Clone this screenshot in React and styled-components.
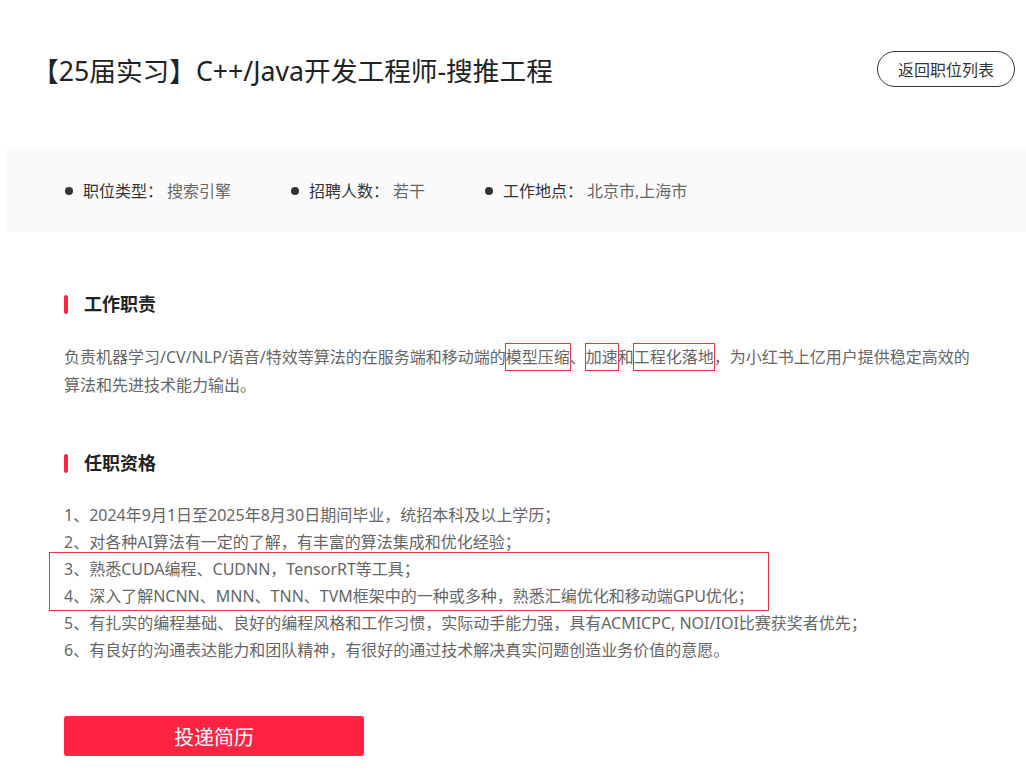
import React from 'react';
import styled, { createGlobalStyle } from 'styled-components';

const GlobalStyle = createGlobalStyle`
    html, body {
        margin: 0;
        padding: 0;
        background: #fff;
        overflow: hidden;
    }
    body {
        font-family: "Noto Sans", "Noto Sans CJK SC", sans-serif;
        color: #333;
    }
`;

const infos = [
    { label: '职位类型：', value: '搜索引擎' },
    { label: '招聘人数：', value: '若干' },
    { label: '工作地点：', value: '北京市,上海市' },
];

const requirements = [
    '1、2024年9月1日至2025年8月30日期间毕业，统招本科及以上学历；',
    '2、对各种AI算法有一定的了解，有丰富的算法集成和优化经验；',
    '3、熟悉CUDA编程、CUDNN，TensorRT等工具；',
    '4、深入了解NCNN、MNN、TNN、TVM框架中的一种或多种，熟悉汇编优化和移动端GPU优化；',
    '5、有扎实的编程基础、良好的编程风格和工作习惯，实际动手能力强，具有ACMICPC, NOI/IOI比赛获奖者优先；',
    '6、有良好的沟通表达能力和团队精神，有很好的通过技术解决真实问题创造业务价值的意愿。',
];

const App = () => {
    return (
        <>
            <GlobalStyle />
            <Page>
                <Header>
                    <Title>【25届实习】C++/Java开发工程师-搜推工程</Title>
                    <BackButton>返回职位列表</BackButton>
                </Header>

                <InfoBand>
                    {infos.map((item) => (
                        <InfoItem key={item.label}>
                            <Dot />
                            <InfoLabel>{item.label}</InfoLabel>
                            <InfoValue>{item.value}</InfoValue>
                        </InfoItem>
                    ))}
                </InfoBand>

                <Content>
                    <SectionTitle>工作职责</SectionTitle>
                    <Paragraph>
                        负责机器学习/CV/NLP/语音/特效等算法的在服务端和移动端的<Mark>模型压缩</Mark>、<Mark>加速</Mark>和<Mark>工程化落地</Mark>，为小红书上亿用户提供稳定高效的算法和先进技术能力输出。
                    </Paragraph>

                    <SectionTitle $top={52}>任职资格</SectionTitle>
                    <List>
                        {requirements.slice(0, 2).map((r) => <Item key={r}>{r}</Item>)}
                        <MarkedBlock>
                            {requirements.slice(2, 4).map((r) => <Item key={r}>{r}</Item>)}
                        </MarkedBlock>
                        {requirements.slice(4).map((r) => <Item key={r}>{r}</Item>)}
                    </List>

                    <ApplyButton>投递简历</ApplyButton>
                </Content>
            </Page>
        </>
    );
};
export default App;

const Page = styled.div`
    width: 1026px;
    min-height: 771px;
    box-sizing: border-box;
`;

const Header = styled.div`
    display: flex;
    justify-content: space-between;
    align-items: center;
    padding: 50px 11px 0 32px;
`;

const Title = styled.h1`
    margin: 0;
    font-size: 26.7px;
    line-height: 42px;
    font-weight: 400;
    color: #222;
`;

const BackButton = styled.button`
    height: 36px;
    padding: 0 20px;
    margin-top: -4px;
    border: 1px solid #333;
    border-radius: 18px;
    background: #fff;
    font-family: inherit;
    font-size: 16px;
    color: #333;
    cursor: pointer;
`;

const InfoBand = styled.div`
    display: flex;
    align-items: center;
    gap: 60px;
    height: 83px;
    margin: 57px 0 0 5px;
    padding-left: 60px;
    background: #fafafa;
`;

const InfoItem = styled.div`
    display: flex;
    align-items: center;
    font-size: 16px;
    line-height: 22px;
`;

const Dot = styled.span`
    width: 8px;
    height: 8px;
    border-radius: 50%;
    background: #333;
    margin-right: 10px;
`;

const InfoLabel = styled.span`
    color: #333;
    margin-right: 4px;
`;

const InfoValue = styled.span`
    color: #666;
`;

const Content = styled.div`
    padding: 0 46px 0 64px;
`;

const SectionTitle = styled.h2`
    display: flex;
    align-items: center;
    margin: ${(p) => p.$top || 60}px 0 0;
    font-size: 18px;
    line-height: 24px;
    font-weight: 700;
    color: #222;

    &::before {
        content: '';
        width: 4px;
        height: 19px;
        border-radius: 2px;
        background: #ff2442;
        margin-right: 16px;
    }
`;

const Paragraph = styled.p`
    margin: 27px 0 0;
    font-size: 16px;
    line-height: 28px;
    color: #666;
`;

const Mark = styled.span`
    display: inline-block;
    vertical-align: top;
    line-height: 26px;
    margin: 0 -1px;
    border: 1px solid #e4393c;
`;

const List = styled.div`
    margin-top: 27px;
    font-size: 16px;
    line-height: 27px;
    color: #666;
`;

const Item = styled.div`
    white-space: nowrap;
`;

const MarkedBlock = styled.div`
    width: 720px;
    box-sizing: border-box;
    margin: -4px 0 -1px -15px;
    padding: 3px 0 0 14px;
    border: 1px solid #e4393c;
`;

const ApplyButton = styled.button`
    display: block;
    width: 300px;
    height: 40px;
    margin-top: 52px;
    border: none;
    border-radius: 3px;
    background: #ff2442;
    color: #fff;
    font-family: inherit;
    font-size: 20px;
    cursor: pointer;
`;
